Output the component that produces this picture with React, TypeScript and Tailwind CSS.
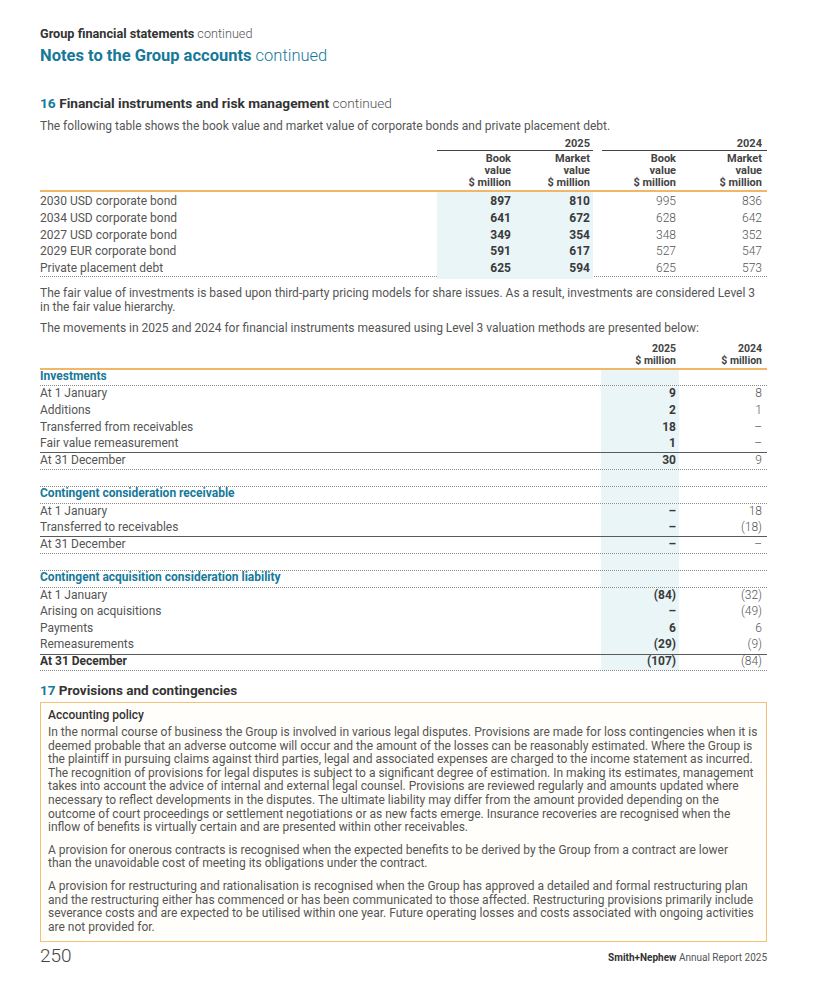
import clsx from "clsx";

const TEAL = "text-[#16799a]";

const bonds = [
  ["2030 USD corporate bond", "897", "810", "995", "836"],
  ["2034 USD corporate bond", "641", "672", "628", "642"],
  ["2027 USD corporate bond", "349", "354", "348", "352"],
  ["2029 EUR corporate bond", "591", "617", "527", "547"],
  ["Private placement debt", "625", "594", "625", "573"],
];

type Line = "dot" | "solid" | "none";
type Row = { label: string; a?: string; b?: string; line: Line; strong?: boolean; head?: boolean; top?: boolean };

const level3: Row[][] = [
  [
    { label: "Investments", line: "dot", head: true },
    { label: "At 1 January", a: "9", b: "8", line: "none" },
    { label: "Additions", a: "2", b: "1", line: "none" },
    { label: "Transferred from receivables", a: "18", b: "–", line: "none" },
    { label: "Fair value remeasurement", a: "1", b: "–", line: "solid" },
    { label: "At 31 December", a: "30", b: "9", line: "dot" },
  ],
  [
    { label: "Contingent consideration receivable", line: "dot", head: true, top: true },
    { label: "At 1 January", a: "–", b: "18", line: "none" },
    { label: "Transferred to receivables", a: "–", b: "(18)", line: "solid" },
    { label: "At 31 December", a: "–", b: "–", line: "dot" },
  ],
  [
    { label: "Contingent acquisition consideration liability", line: "dot", head: true, top: true },
    { label: "At 1 January", a: "(84)", b: "(32)", line: "none" },
    { label: "Arising on acquisitions", a: "–", b: "(49)", line: "none" },
    { label: "Payments", a: "6", b: "6", line: "none" },
    { label: "Remeasurements", a: "(29)", b: "(9)", line: "solid" },
    { label: "At 31 December", a: "(107)", b: "(84)", line: "dot", strong: true },
  ],
];

const policy = [
  [
    "In the normal course of business the Group is involved in various legal disputes. Provisions are made for loss contingencies when it is",
    "deemed probable that an adverse outcome will occur and the amount of the losses can be reasonably estimated. Where the Group is",
    "the plaintiff in pursuing claims against third parties, legal and associated expenses are charged to the income statement as incurred.",
    "The recognition of provisions for legal disputes is subject to a significant degree of estimation. In making its estimates, management",
    "takes into account the advice of internal and external legal counsel. Provisions are reviewed regularly and amounts updated where",
    "necessary to reflect developments in the disputes. The ultimate liability may differ from the amount provided depending on the",
    "outcome of court proceedings or settlement negotiations or as new facts emerge. Insurance recoveries are recognised when the",
    "inflow of benefits is virtually certain and are presented within other receivables.",
  ],
  [
    "A provision for onerous contracts is recognised when the expected benefits to be derived by the Group from a contract are lower",
    "than the unavoidable cost of meeting its obligations under the contract.",
  ],
  [
    "A provision for restructuring and rationalisation is recognised when the Group has approved a detailed and formal restructuring plan",
    "and the restructuring either has commenced or has been communicated to those affected. Restructuring provisions primarily include",
    "severance costs and are expected to be utilised within one year. Future operating losses and costs associated with ongoing activities",
    "are not provided for.",
  ],
];

function Level3Row({ r }: { r: Row }) {
  return (
    <div
      className={clsx(
        "grid grid-cols-[561px_78px_10px_78px] leading-[12px]",
        r.top ? "h-[18px] border-t border-dotted border-[#8a8a8a]" : "h-[16.7px]",
        r.line === "dot" && "border-b border-dotted border-[#8a8a8a]",
        r.line === "solid" && "border-b border-[#5a5a5a]"
      )}
    >
      <div
        className={clsx(
          "flex items-center pb-[3px]",
          r.head ? `font-bold ${TEAL}` : r.strong ? "font-bold text-[#333]" : "text-[#555]"
        )}
      >
        {r.label}
      </div>
      <div className="flex items-center justify-end bg-[#eaf5f8] pr-[3px] pb-[3px] font-bold text-[#3a3a3a]">{r.a}</div>
      <div />
      <div className="flex items-center justify-end pr-[5px] pb-[3px] font-light text-[#555]">{r.b}</div>
    </div>
  );
}

export default function App() {
  return (
    <div className="relative h-[983px] w-[826px] bg-white pt-[26px] pr-[59px] pl-[40px] font-['Roboto',sans-serif] text-[12px] text-[#555]">
      <div className="text-[12.7px] leading-[16px] text-[#333]">
        <span className="font-bold">Group financial statements</span> <span className="font-light text-[#555]">continued</span>
      </div>
      <div className={`mt-[4px] text-[16.5px] leading-[20px] ${TEAL}`}>
        <span className="font-bold">Notes to the Group accounts</span> <span className="font-light">continued</span>
      </div>

      <div className="mt-[29px] text-[13.7px] leading-[16px] text-[#333]">
        <span className={`font-bold ${TEAL}`}>16</span> <span className="font-bold">Financial instruments and risk management</span>{" "}
        <span className="font-light text-[#555]">continued</span>
      </div>
      <p className="mt-[8px] leading-[14px]">
        The following table shows the book value and market value of corporate bonds and private placement debt.
      </p>

      {/* bonds table */}
      <div className="mt-[4px]">
        <div className="grid grid-cols-[397px_156px_9px_165px] text-[11px] font-bold text-[#444]">
          <div />
          <div className="border-b border-[#444] pr-[3px] text-right leading-[13px]">2025</div>
          <div />
          <div className="border-b border-[#444] pr-[5px] text-right leading-[13px]">2024</div>
        </div>
        <div className="grid grid-cols-[397px_78px_78px_9px_78px_9px_78px] border-b-2 border-[#f2b766] pt-[2px] pb-[1px] text-[11px] font-bold leading-[12px] text-[#444]">
          <div />
          <div className="pr-[4px] text-right">Book<br />value<br />$ million</div>
          <div className="pr-[3px] text-right">Market<br />value<br />$ million</div>
          <div />
          <div className="pr-[4px] text-right">Book<br />value<br />$ million</div>
          <div />
          <div className="pr-[5px] text-right">Market<br />value<br />$ million</div>
        </div>
        <div className="border-b border-dotted border-[#8a8a8a]">
          {bonds.map((r) => (
            <div key={r[0]} className="grid h-[16.75px] grid-cols-[397px_78px_78px_9px_78px_9px_78px]">
              <div className="flex items-center pb-[2px]">{r[0]}</div>
              <div className="flex items-center justify-end bg-[#eaf5f8] pr-[4px] pb-[2px] font-bold text-[#3a3a3a]">{r[1]}</div>
              <div className="flex items-center justify-end bg-[#eaf5f8] pr-[3px] pb-[2px] font-bold text-[#3a3a3a]">{r[2]}</div>
              <div />
              <div className="flex items-center justify-end pr-[4px] pb-[2px] font-light">{r[3]}</div>
              <div />
              <div className="flex items-center justify-end pr-[5px] pb-[2px] font-light">{r[4]}</div>
            </div>
          ))}
        </div>
      </div>

      <p className="mt-[9px] whitespace-nowrap leading-[14px]">
        The fair value of investments is based upon third-party pricing models for share issues. As a result, investments are considered Level 3
        <br />
        in the fair value hierarchy.
      </p>
      <p className="mt-[7px] leading-[14px]">
        The movements in 2025 and 2024 for financial instruments measured using Level 3 valuation methods are presented below:
      </p>

      {/* level 3 table */}
      <div className="mt-[8px]">
        <div className="grid grid-cols-[561px_78px_10px_78px] border-b-2 border-[#f2b766] pb-[1px] text-[10.5px] font-bold leading-[12px] text-[#444]">
          <div />
          <div className="pr-[3px] text-right">2025<br />$ million</div>
          <div />
          <div className="pr-[5px] text-right">2024<br />$ million</div>
        </div>
        {level3.map((sec, i) => (
          <div key={i}>
            {i > 0 && (
              <div className="grid h-[16px] grid-cols-[561px_78px_10px_78px]">
                <div />
                <div className="bg-[#eaf5f8]" />
              </div>
            )}
            {sec.map((r, j) => (
              <Level3Row key={j} r={r} />
            ))}
          </div>
        ))}
      </div>

      {/* note 17 */}
      <div className="mt-[11px] text-[13.5px] leading-[16px] text-[#333]">
        <span className={`font-bold ${TEAL}`}>17</span> <span className="font-bold">Provisions and contingencies</span>
      </div>
      <div className="mt-[4px] border border-[#f3c07a] bg-[#fffefa] px-[7px] pt-[6px] pb-[7px] leading-[13.6px]">
        <div className="mb-[3px] font-medium text-[#333]">Accounting policy</div>
        {policy.map((para, i) => (
          <p key={i} className={clsx("whitespace-nowrap", i > 0 && "mt-[9px]")}>
            {para.map((l) => (
              <span key={l} className="block">
                {l}
              </span>
            ))}
          </p>
        ))}
      </div>

      <div className="mt-[2px] flex items-end justify-between">
        <div className="text-[19px] font-light leading-[24px] text-[#444]">250</div>
        <div className="pb-[4px] text-[10px] leading-[12px] text-[#555]">
          <span className="font-bold text-[#333]">Smith+Nephew</span> Annual Report 2025
        </div>
      </div>
    </div>
  );
}
